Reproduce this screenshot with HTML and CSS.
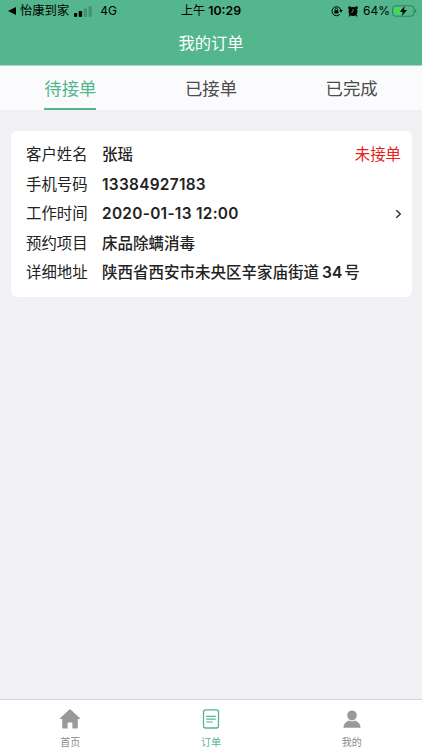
FILE: index.html
```html
<!DOCTYPE html>
<html lang="zh-CN">
<head>
  <meta charset="UTF-8" />
  <meta name="viewport" content="width=device-width, initial-scale=1.0"/>
  <title>我的订单</title>
  <link rel="stylesheet" href="styles.css">
</head>
<body>

  <header class="header">
    <div class="status">
      <div class="status-left">
        <svg class="back" width="8" height="8" viewBox="0 0 8 8"><path d="M8 0v8L0 4z"/></svg>
        <span class="app">怡康到家</span>
        <svg class="signal" width="18" height="11" viewBox="0 0 18 11">
          <rect x="0" y="7" width="3.2" height="4" rx="1"/>
          <rect x="4.7" y="5" width="3.4" height="6" rx="1"/>
          <rect x="9.8" y="2.5" width="3.2" height="8.5" rx="1" opacity=".2"/>
          <rect x="14.6" y="0" width="3.2" height="11" rx="1" opacity=".2"/>
        </svg>
        <span class="network">4G</span>
      </div>
      <div class="status-time">上午 <b>10:29</b></div>
      <div class="status-right">
        <svg class="lock" width="12" height="12" viewBox="0 0 12 12">
          <path d="M8.8 9.4A4.5 4.5 0 1 1 9.9 5" fill="none" stroke="#000" stroke-width="1"/>
          <path d="M8.3 5h3.5L10 7.7z"/>
          <rect x="3.4" y="5.3" width="4" height="3.1" rx=".5"/>
          <path d="M4.2 5.5V4.4a1.2 1.2 0 0 1 2.4 0v1.1" fill="none" stroke="#000" stroke-width=".8"/>
        </svg>
        <svg class="alarm" width="10" height="11" viewBox="0 0 10 11">
          <circle cx="5" cy="5.6" r="4.5"/>
          <circle cx="1.7" cy="1.8" r="1.6"/>
          <circle cx="8.3" cy="1.8" r="1.6"/>
          <path d="M2.2 8.5L1 10.4M7.8 8.5L9 10.4" stroke="#000" stroke-width="1.3"/>
          <path d="M5 3v2.8L3.1 6.7" fill="none" stroke="#53b68d" stroke-width=".8"/>
        </svg>
        <span class="percent">64%</span>
        <svg class="battery" width="25" height="12" viewBox="0 0 25 12">
          <rect x=".5" y=".8" width="21.5" height="10.4" rx="3" fill="none" stroke="#286f50" stroke-opacity=".75"/>
          <path d="M3.8 2.2H9v7.6H3.8A1.8 1.8 0 0 1 2 8V4a1.8 1.8 0 0 1 1.8-1.8z" fill="#42d95b"/>
          <path d="M23.2 4.2c1.6.6 1.6 3 0 3.6z" fill="#286f50"/>
          <path d="M13 1L7.7 6.8h3.2L9.8 11l5.3-6h-3.2z"/>
        </svg>
      </div>
    </div>
    <h1>我的订单</h1>
  </header>

  <nav class="tabs">
    <div class="tab active"><span>待接单</span></div>
    <div class="tab"><span>已接单</span></div>
    <div class="tab"><span>已完成</span></div>
  </nav>

  <main>
    <div class="card">
      <dl class="info">
        <div class="row"><dt>客户姓名</dt><dd>张瑶</dd><span class="state">未接单</span></div>
        <div class="row"><dt>手机号码</dt><dd class="num">13384927183</dd></div>
        <div class="row">
          <dt>工作时间</dt><dd class="num">2020-01-13 12:00</dd>
          <svg class="arrow" width="7" height="10" viewBox="0 0 7 10"><path d="M1.3 1.2L5.3 5l-4 3.8" fill="none" stroke="#222" stroke-width="1.3"/></svg>
        </div>
        <div class="row"><dt>预约项目</dt><dd>床品除螨消毒</dd></div>
        <div class="row"><dt>详细地址</dt><dd>陕西省西安市未央区辛家庙街道<b>34</b>号</dd></div>
      </dl>
    </div>
  </main>

  <footer class="tabbar">
    <div class="item">
      <svg width="22" height="22" viewBox="0 0 22 22"><path d="M11 1L1 10.3c-.3.4-.1.8.4.8h1.8v8.4c0 .6.3.9.9.9h4.500v-5.2c0-.5.3-.8.8-.8h3.2c.5 0 .8.3.8.8v5.2h4.500c.6 0 .9-.3.9-.9v-8.4h1.8c.5 0 .7-.4.4-.8z" fill="#999"/></svg>
      <span>首页</span>
    </div>
    <div class="item active">
      <svg width="22" height="22" viewBox="0 0 22 22"><g fill="none" stroke="#53b68d"><rect x="3.5" y="1.8" width="15" height="18.2" rx="2.2" stroke-width="1.3"/><path d="M6.2 8.3h9.6M6.2 11.2h9.6M6.2 14h6.6" stroke-width="1.2"/></g></svg>
      <span>订单</span>
    </div>
    <div class="item">
      <svg width="22" height="22" viewBox="0 0 22 22"><g fill="#999"><ellipse cx="11" cy="7.4" rx="4.7" ry="5"/><path d="M2.5 19.7c0-3.6 1.8-5.7 5.5-7.2 2 1.2 4 1.2 6 0 3.7 1.5 5.5 3.6 5.5 7.2z"/></g></svg>
      <span>我的</span>
    </div>
  </footer>

</body>
</html>
```

FILE: styles.css
```css
* {
  box-sizing: border-box;
}

body {
  margin: 0;
  height: 100vh;
  display: flex;
  flex-direction: column;
  background-color: #f0f0f5;
  color: #222;
  font-family: Inter, "Noto Sans CJK SC", sans-serif;
}

svg {
  display: block;
  flex: none;
}

.header {
  height: 66px;
  background-color: #53b68d;
  border-bottom: 1px solid #a5d9c2;
}

.status {
  display: grid;
  grid-template-columns: 1fr auto 1fr;
  height: 22px;
  color: #000;
  font-size: 12px;
  line-height: 22px;
  white-space: nowrap;
}

.status-left,
.status-right {
  display: flex;
  align-items: center;
}

.status-left {
  padding-left: 8px;
}

.status-right {
  justify-content: flex-end;
  padding-right: 5px;
}

.app {
  margin-left: 4px;
  font-size: 12.3px;
}

.signal {
  margin-left: 5px;
}

.network {
  margin-left: 8px;
}

.status-time b {
  font-size: 12.3px;
  font-weight: 600;
}

.alarm {
  margin-left: 5px;
}

.percent {
  margin: 0 2px 0 5px;
}

h1 {
  margin: 0;
  color: #fff;
  font-size: 16.3px;
  font-weight: 400;
  line-height: 43px;
  text-align: center;
}

.tabs {
  display: flex;
  height: 44px;
  background-color: #fbfbfd;
}

.tab {
  flex: 1;
  display: flex;
  justify-content: center;
  color: #4c4c4c;
  font-size: 17.4px;
  line-height: 45px;
}

.tab.active {
  color: #53b68d;
}

.tab.active span {
  height: 44px;
  border-bottom: 2px solid #53b68d;
}

main {
  flex: 1;
  padding: 21px 10.5px;
}

.card {
  height: 166px;
  padding: 9px 10.5px 0 15.5px;
  border-radius: 6px;
  background-color: #fff;
}

.info {
  margin: 0;
}

.row {
  display: flex;
  align-items: center;
  height: 29.6px;
  font-size: 15.4px;
  line-height: 29.6px;
  white-space: nowrap;
}

dt {
  width: 76px;
}

dd {
  flex: 1;
  margin: 0;
  font-size: 15.5px;
  font-weight: 500;
}

.num {
  font-size: 15.4px;
  font-weight: 600;
  letter-spacing: 0.3px;
}

dd b {
  margin: 0 2px 0 3px;
  font-weight: 600;
}

.state {
  color: #e62117;
}

.arrow {
  margin-right: -1px;
}

.tabbar {
  display: flex;
  height: 51px;
  background-color: #fff;
  border-top: 1px solid #d5d5d8;
}

.item {
  flex: 1;
  display: flex;
  flex-direction: column;
  align-items: center;
  padding-top: 8px;
  color: #8c8c8c;
  font-size: 10px;
  line-height: 24px;
}

.item.active {
  color: #53b68d;
}
```
